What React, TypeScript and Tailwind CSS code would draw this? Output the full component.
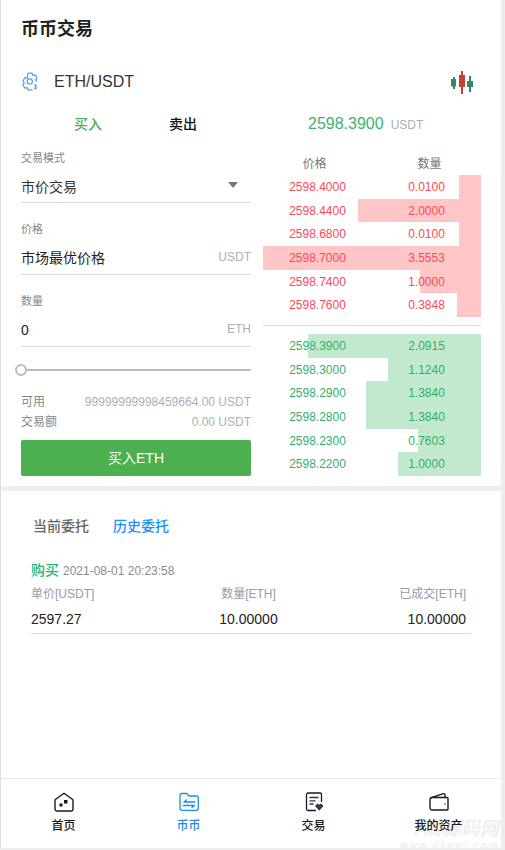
const asks = [
  { p: "2598.4000", q: "0.0100", w: 22, h: "h-[24px]" },
  { p: "2598.4400", q: "2.0000", w: 123, h: "h-[23px]" },
  { p: "2598.6800", q: "0.0100", w: 22, h: "h-[24px]" },
  { p: "2598.7000", q: "3.5553", w: 218, h: "h-[24px]" },
  { p: "2598.7400", q: "1.0000", w: 61, h: "h-[23px]" },
  { p: "2598.7600", q: "0.3848", w: 24, h: "h-[24px]" },
];
const bids = [
  { p: "2598.3900", q: "2.0915", w: 173, h: "h-[24px]" },
  { p: "2598.3000", q: "1.1240", w: 93, h: "h-[23px]" },
  { p: "2598.2900", q: "1.3840", w: 115, h: "h-[24px]" },
  { p: "2598.2800", q: "1.3840", w: 115, h: "h-[24px]" },
  { p: "2598.2300", q: "0.7603", w: 63, h: "h-[23px]" },
  { p: "2598.2200", q: "1.0000", w: 83, h: "h-[24px]" },
];

function Row({ r, bar, text }: { r: { p: string; q: string; w: number; h: string }; bar: string; text: string }) {
  return (
    <div className={`relative flex items-center text-xs ${r.h} ${text}`}>
      <div className={`absolute right-0 top-0 bottom-0 ${bar}`} style={{ width: r.w }} />
      <span className="relative flex-1 text-center">{r.p}</span>
      <span className="relative flex-1 text-center">{r.q}</span>
    </div>
  );
}

function GearIcon() {
  return (
    <svg width="20" height="20" viewBox="0 0 20 20" fill="none" stroke="#4f9ef8" strokeWidth="1.200" strokeLinejoin="round" strokeLinecap="round">
      <path d="M12.200 17.800H8l-.8-2.100-2.300.5-2.100-3.400 1.500-1.900-1.500-1.800 2.100-3.400 2.300.5L8 1.200h4l.8 2.100 2.300-.5 2.100 3.400-1.500 1.800 1 1.200" />
      <circle cx="9.800" cy="9.400" r="2.600" />
      <path d="M16.800 13.400c-.5-.6-2.200-.6-2.300.4-.1 1.200 2.400.7 2.400 2 0 1-1.900 1.100-2.600.3M15.500 12.300v5.200" strokeWidth="0.900" />
    </svg>
  );
}

function Candles() {
  return (
    <svg width="23" height="23" viewBox="0 0 23 23">
      <rect x="2" y="6" width="2" height="12" fill="#2e8b63" />
      <rect x="0" y="8" width="5" height="7.500" fill="#2e8b63" />
      <rect x="10" y="0" width="2" height="23" fill="#c0432f" />
      <rect x="8" y="4" width="6" height="12" fill="#c0432f" />
      <rect x="18" y="5" width="2" height="16" fill="#2e8b63" />
      <rect x="16" y="10" width="6" height="6" fill="#2e8b63" />
    </svg>
  );
}

function HomeIcon() {
  return (
    <svg width="20" height="20" viewBox="0 0 20 20" fill="none">
      <path d="M1 7.800 10 1.200l9 6.600v9.200a2 2 0 0 1-2 2H3a2 2 0 0 1-2-2z" stroke="#1a1a2a" strokeWidth="1.400" strokeLinejoin="round" />
      <rect x="10" y="8" width="3.500" height="3.500" fill="#1a1a2a" />
      <rect x="5.500" y="11.500" width="3" height="3" fill="#1a1a2a" />
    </svg>
  );
}

function SwapIcon() {
  return (
    <svg width="20" height="20" viewBox="0 0 20 20" fill="none" stroke="#1f8de0" strokeWidth="1.300" strokeLinejoin="round">
      <path d="M1 3a1.500 1.500 0 0 1 1.500-1.500h5.500l2 2.500h7.500a1.800 1.800 0 0 1 1.800 1.800v10.500a2 2 0 0 1-2 2H3a2 2 0 0 1-2-2z" />
      <path d="M5 10h11M5 10l2.500-2M4.500 13.500h11M15.500 13.500l-2.500 2" strokeLinecap="round" />
    </svg>
  );
}

function TradeIcon() {
  return (
    <svg width="20" height="20" viewBox="0 0 20 20" fill="none">
      <path d="M12 18.500H4a1.500 1.500 0 0 1-1.500-1.500V2.500A1.500 1.500 0 0 1 4 1h12a1.500 1.500 0 0 1 1.500 1.500V10" stroke="#1a1a2a" strokeWidth="1.300" />
      <path d="M5.500 5.500h9M5.500 8.800h6M5.500 12h4" stroke="#333344" strokeWidth="1.300" />
      <path d="M11 14 13.500 11.500l1.800 1.300 1.700-1.300 2.500 2.500-4.200 4.800z" fill="#3a3a46" />
    </svg>
  );
}

function WalletIcon() {
  return (
    <svg width="20" height="20" viewBox="0 0 20 20" fill="none" stroke="#1a1a2a" strokeWidth="1.400" strokeLinejoin="round">
      <path d="M1 7.500a2 2 0 0 1 2-2h15a1 1 0 0 1 1 1V17a1 1 0 0 1-1 1H3a2 2 0 0 1-2-2z" />
      <path d="M1.500 6 13.500 1.800c1.500-.5 2.500.300 2.500 1.500v2" />
      <path d="M15.500 12.200h1" strokeWidth="1.600" />
    </svg>
  );
}

const navItems = [
  { label: "首页", icon: <HomeIcon />, cls: "text-[#1a1a1a]" },
  { label: "币币", icon: <SwapIcon />, cls: "text-[#1f8de0]" },
  { label: "交易", icon: <TradeIcon />, cls: "text-[#1a1a1a]" },
  { label: "我的资产", icon: <WalletIcon />, cls: "text-[#1a1a1a]" },
];

export default function App() {
  return (
    <div className="relative h-[850px] w-[505px] overflow-hidden bg-[#eeeeee] font-['Liberation_Sans','Noto_Sans_CJK_SC',sans-serif]">
      <div className="absolute left-[400px] top-[818px] w-[99px] text-right italic font-bold text-[#eef0f2] z-10">
        <div className="text-[19px] leading-[22px]">7周源码网</div>
        <div className="text-[10px] leading-[11px] tracking-[1.700px]">www.dkewl.com</div>
      </div>
      <div className="flex h-[848px] w-[501px] flex-col border-l border-l-[#dddddd] bg-white">
        <h1 className="pl-5 pt-[18px] text-lg leading-[22px] font-bold text-[#222222]">币币交易</h1>

        <div className="mt-[20px] flex h-[44px] items-center justify-between pl-[19px] pr-[27px]">
          <div className="flex items-center gap-[14px]">
            <GearIcon />
            <span className="text-base text-[#333333]">ETH/USDT</span>
          </div>
          <Candles />
        </div>

        <div className="mt-[8px] flex h-[24px] items-center">
          <span className="ml-[73px] text-sm font-medium text-[#4caf50]">买入</span>
          <span className="ml-[67px] text-sm font-medium text-[#111111]">卖出</span>
          <span className="ml-[111px] text-base text-[#3cb371]">2598.3900</span>
          <span className="ml-[7px] mt-[2px] text-xs text-[#aab0b8]">USDT</span>
        </div>

        <div className="mt-[10px] flex pl-5 pr-5">
          <div className="w-[230px] pt-[4px]">
            <div className="text-[11px] leading-[16px] text-[#888888]">交易模式</div>
            <div className="mt-[5px] flex h-[32px] items-center justify-between border-b border-[#dddddd] text-[13px] text-[#333333]">
              <span className="text-sm">市价交易</span>
              <span className="mb-[3px] mr-[13px] h-0 w-0 border-x-[5px] border-t-[6px] border-x-transparent border-t-[#777777]" />
            </div>

            <div className="mt-[18px] text-[11px] leading-[16px] text-[#888888]">价格</div>
            <div className="mt-[5px] flex h-[33px] items-center justify-between border-b border-[#dddddd]">
              <span className="text-sm text-[#222222]">市场最优价格</span>
              <span className="mb-[3px] text-xs text-[#aab0b8]">USDT</span>
            </div>

            <div className="mt-[18px] text-[11px] leading-[16px] text-[#888888]">数量</div>
            <div className="mt-[5px] flex h-[33px] items-center justify-between border-b border-[#dddddd]">
              <span className="text-sm text-[#222222]">0</span>
              <span className="mb-[3px] text-xs text-[#aab0b8]">ETH</span>
            </div>

            <div className="relative mt-[18px] h-[12px]">
              <div className="absolute left-0 right-0 top-[4px] h-[2px] bg-[#bbbbbb]" />
              <div className="absolute -left-[6px] top-[-1px] h-[12px] w-[12px] rounded-full border-2 border-[#bbbbbb] bg-white" />
            </div>

            <div className="mt-[15px] flex h-[20px] items-center justify-between text-xs">
              <span className="text-[#888888]">可用</span>
              <span className="text-[#aab0b8]">99999999998459664.00 USDT</span>
            </div>
            <div className="flex h-[20px] items-center justify-between text-xs">
              <span className="text-[#888888]">交易额</span>
              <span className="text-[#aab0b8]">0.00 USDT</span>
            </div>

            <button className="mt-[8px] h-[36px] w-full rounded-[2px] bg-[#4caf50] text-sm text-white">买入ETH</button>
          </div>

          <div className="ml-[12px] w-[218px]">
            <div className="flex h-[29px] items-center pt-[6px] text-xs text-[#777777]">
              <span className="flex-1 pr-[7px] text-center">价格</span>
              <span className="flex-1 pl-[5px] text-center">数量</span>
            </div>
            <div>
              {asks.map((r) => (
                <Row key={r.p} r={r} bar="bg-[#fec6c6]" text="text-[#fb4a57]" />
              ))}
            </div>
            <div className="mt-[8px] mb-[8px] h-px bg-[#e0e0e0]" />
            <div>
              {bids.map((r) => (
                <Row key={r.p} r={r} bar="bg-[#c2e8cd]" text="text-[#33b06c]" />
              ))}
            </div>
          </div>
        </div>

        <div className="mt-[10px] h-[5px] bg-[#eeeeee]" />

        <div className="flex gap-[24px] pl-[32px] pt-[25px] text-sm leading-[20px] font-medium">
          <span className="text-[#666666]">当前委托</span>
          <span className="text-[#1e90ff]">历史委托</span>
        </div>

        <div className="mx-[30px] mt-[24px] border-b border-[#dddddd] pb-[6px]">
          <div className="flex h-[20px] items-center">
            <span className="text-sm font-medium text-[#22b573]">购买</span>
            <span className="ml-[4px] mt-[1px] text-xs text-[#8a8a94]">2021-08-01 20:23:58</span>
          </div>
          <div className="mt-[5px] grid h-[18px] grid-cols-3 items-center pr-[5px] text-xs text-[#9a9aa8]">
            <span>单价[USDT]</span>
            <span className="text-center">数量[ETH]</span>
            <span className="text-right">已成交[ETH]</span>
          </div>
          <div className="mt-[6px] grid h-[18px] grid-cols-3 items-center pr-[5px] text-sm text-[#222222]">
            <span>2597.27</span>
            <span className="text-center">10.00000</span>
            <span className="text-right">10.00000</span>
          </div>
        </div>

        <div className="mt-auto grid h-[70px] grid-cols-4 border-t border-[#e8e8e8]">
          {navItems.map((n) => (
            <div key={n.label} className={`relative z-20 flex flex-col items-center pt-[13px] text-xs font-medium ${n.cls}`}>
              {n.icon}
              <span className="mt-[5px] leading-[18px]">{n.label}</span>
            </div>
          ))}
        </div>
      </div>
    </div>
  );
}
